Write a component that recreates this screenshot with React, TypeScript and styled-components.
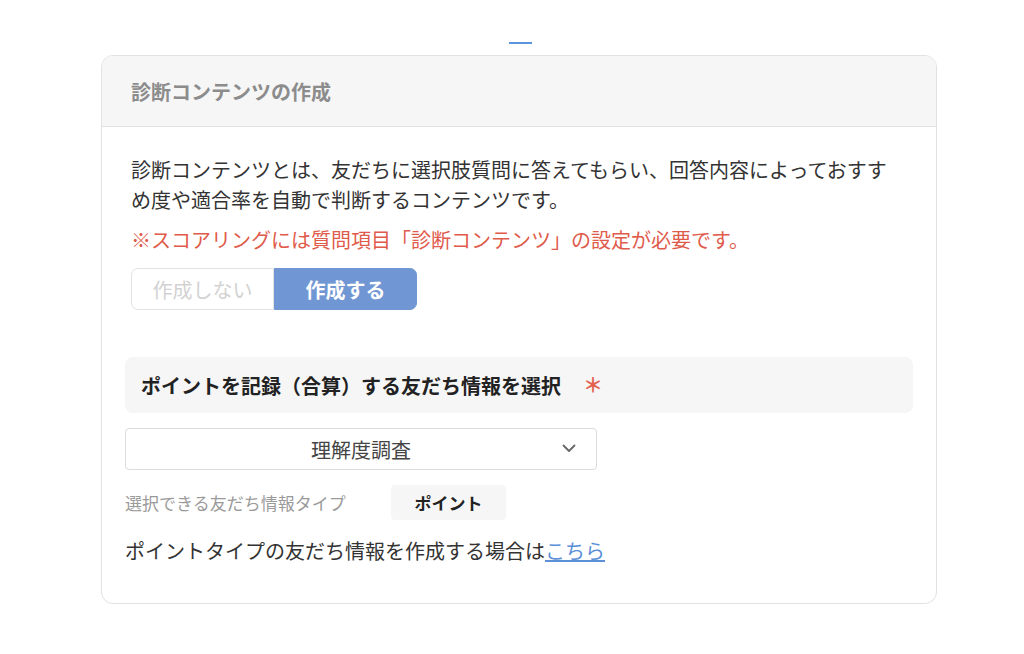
import React from "react";
import styled, {createGlobalStyle} from "styled-components";

const GlobalStyle = createGlobalStyle`
    body {
        margin: 0;
        background: #ffffff;
        font-family: "Noto Sans CJK JP", "Noto Sans", sans-serif;
        color: #333333;
    }
`;

// styled components

const Page = styled.div`
    width: 1024px;
    padding-top: 42px;
    padding-bottom: 50px;
`;

const TabMark = styled.div`
    width: 23px;
    height: 2px;
    background-color: #5b95dd;
    margin: 0 0 11px 509px;
`;

const Card = styled.section`
    margin-left: 101px;
    width: 836px;
    box-sizing: border-box;
    border: 1px solid #e2e2e2;
    border-radius: 12px;
    overflow: hidden;
`;

const CardHeader = styled.div`
    height: 71px;
    box-sizing: border-box;
    display: flex;
    align-items: center;
    padding-left: 29px;
    background-color: #f6f6f6;
    border-bottom: 1px solid #e2e2e2;
`;

const CardTitle = styled.h2`
    margin: 0;
    font-size: 20px;
    font-weight: 700;
    color: #8c8c8c;
`;

const CardBody = styled.div`
    padding: 28px 23px 37px;
    display: flex;
    flex-direction: column;
`;

const Intro = styled.div`
    padding-left: 6px;
    padding-right: 20px;
`;

const Description = styled.p`
    margin: 0;
    font-size: 20px;
    line-height: 30px;
    color: #333333;
`;

const Notice = styled.p`
    margin: 10px 0 0;
    font-size: 20px;
    line-height: 30px;
    color: #df5b4b;
`;

const Toggle = styled.div`
    display: flex;
    margin-top: 13px;
    width: 286px;
    height: 42px;
`;

const ToggleButton = styled.button<{ $active?: boolean }>`
    flex: 1;
    font-family: inherit;
    font-size: 20px;
    font-weight: ${p => (p.$active ? 700 : 400)};
    color: ${p => (p.$active ? "#ffffff" : "#d2d2d2")};
    background-color: ${p => (p.$active ? "#7097d3" : "#ffffff")};
    border: 1px solid ${p => (p.$active ? "#7097d3" : "#e2e2e2")};
    border-radius: ${p => (p.$active ? "0 7px 7px 0" : "7px 0 0 7px")};
    padding: 0;
    cursor: pointer;
`;

const SectionHeading = styled.div`
    margin-top: 47px;
    height: 56px;
    display: flex;
    align-items: center;
    padding-left: 16px;
    background-color: #f6f6f6;
    border-radius: 8px;
`;

const SectionTitle = styled.h3`
    margin: 0;
    font-size: 20px;
    font-weight: 700;
    color: #222222;
`;

const Required = styled.span`
    margin-left: 22px;
    font-size: 20px;
    font-weight: 700;
    color: #e4604f;
    line-height: 1;
`;

const SelectBox = styled.div`
    margin-top: 15px;
    width: 472px;
    height: 42px;
    box-sizing: border-box;
    border: 1px solid #dcdcdc;
    border-radius: 4px;
    position: relative;
    display: flex;
    align-items: center;
    justify-content: center;
`;

const SelectValue = styled.span`
    font-size: 20px;
    color: #444444;
`;

const Chevron = styled.svg`
    position: absolute;
    right: 20px;
    top: 15px;
`;

const TypeRow = styled.div`
    margin-top: 15px;
    display: grid;
    grid-template-columns: 266px 115px;
    align-items: center;
`;

const TypeLabel = styled.span`
    font-size: 17px;
    color: #9a9a9a;
`;

const TypeChip = styled.span`
    height: 35px;
    display: flex;
    align-items: center;
    justify-content: center;
    background-color: #f6f6f6;
    border-radius: 4px;
    font-size: 17px;
    font-weight: 700;
    color: #222222;
`;

const Footnote = styled.p`
    margin: 16px 0 0;
    font-size: 20px;
    line-height: 30px;
    color: #333333;
`;

const HereLink = styled.a`
    color: #5b8fd8;
    text-decoration: underline;
`;

function App() {
    return (
        <Page>
            <GlobalStyle/>
            <TabMark/>
            <Card>
                <CardHeader>
                    <CardTitle>診断コンテンツの作成</CardTitle>
                </CardHeader>
                <CardBody>
                    <Intro>
                        <Description>
                            診断コンテンツとは、友だちに選択肢質問に答えてもらい、回答内容によっておすすめ度や適合率を自動で判断するコンテンツです。
                        </Description>
                        <Notice>※スコアリングには質問項目「診断コンテンツ」の設定が必要です。</Notice>
                        <Toggle>
                            <ToggleButton>作成しない</ToggleButton>
                            <ToggleButton $active>作成する</ToggleButton>
                        </Toggle>
                    </Intro>
                    <SectionHeading>
                        <SectionTitle>ポイントを記録（合算）する友だち情報を選択</SectionTitle>
                        <Required>＊</Required>
                    </SectionHeading>
                    <SelectBox>
                        <SelectValue>理解度調査</SelectValue>
                        <Chevron width="14" height="9" viewBox="0 0 14 9" fill="none">
                            <path d="M1.5 1.5 L7 7 L12.5 1.5" stroke="#666" strokeWidth="1.8" strokeLinecap="round" strokeLinejoin="round"/>
                        </Chevron>
                    </SelectBox>
                    <TypeRow>
                        <TypeLabel>選択できる友だち情報タイプ</TypeLabel>
                        <TypeChip>ポイント</TypeChip>
                    </TypeRow>
                    <Footnote>
                        ポイントタイプの友だち情報を作成する場合は<HereLink href="#">こちら</HereLink>
                    </Footnote>
                </CardBody>
            </Card>
        </Page>
    );
}

export default App;
